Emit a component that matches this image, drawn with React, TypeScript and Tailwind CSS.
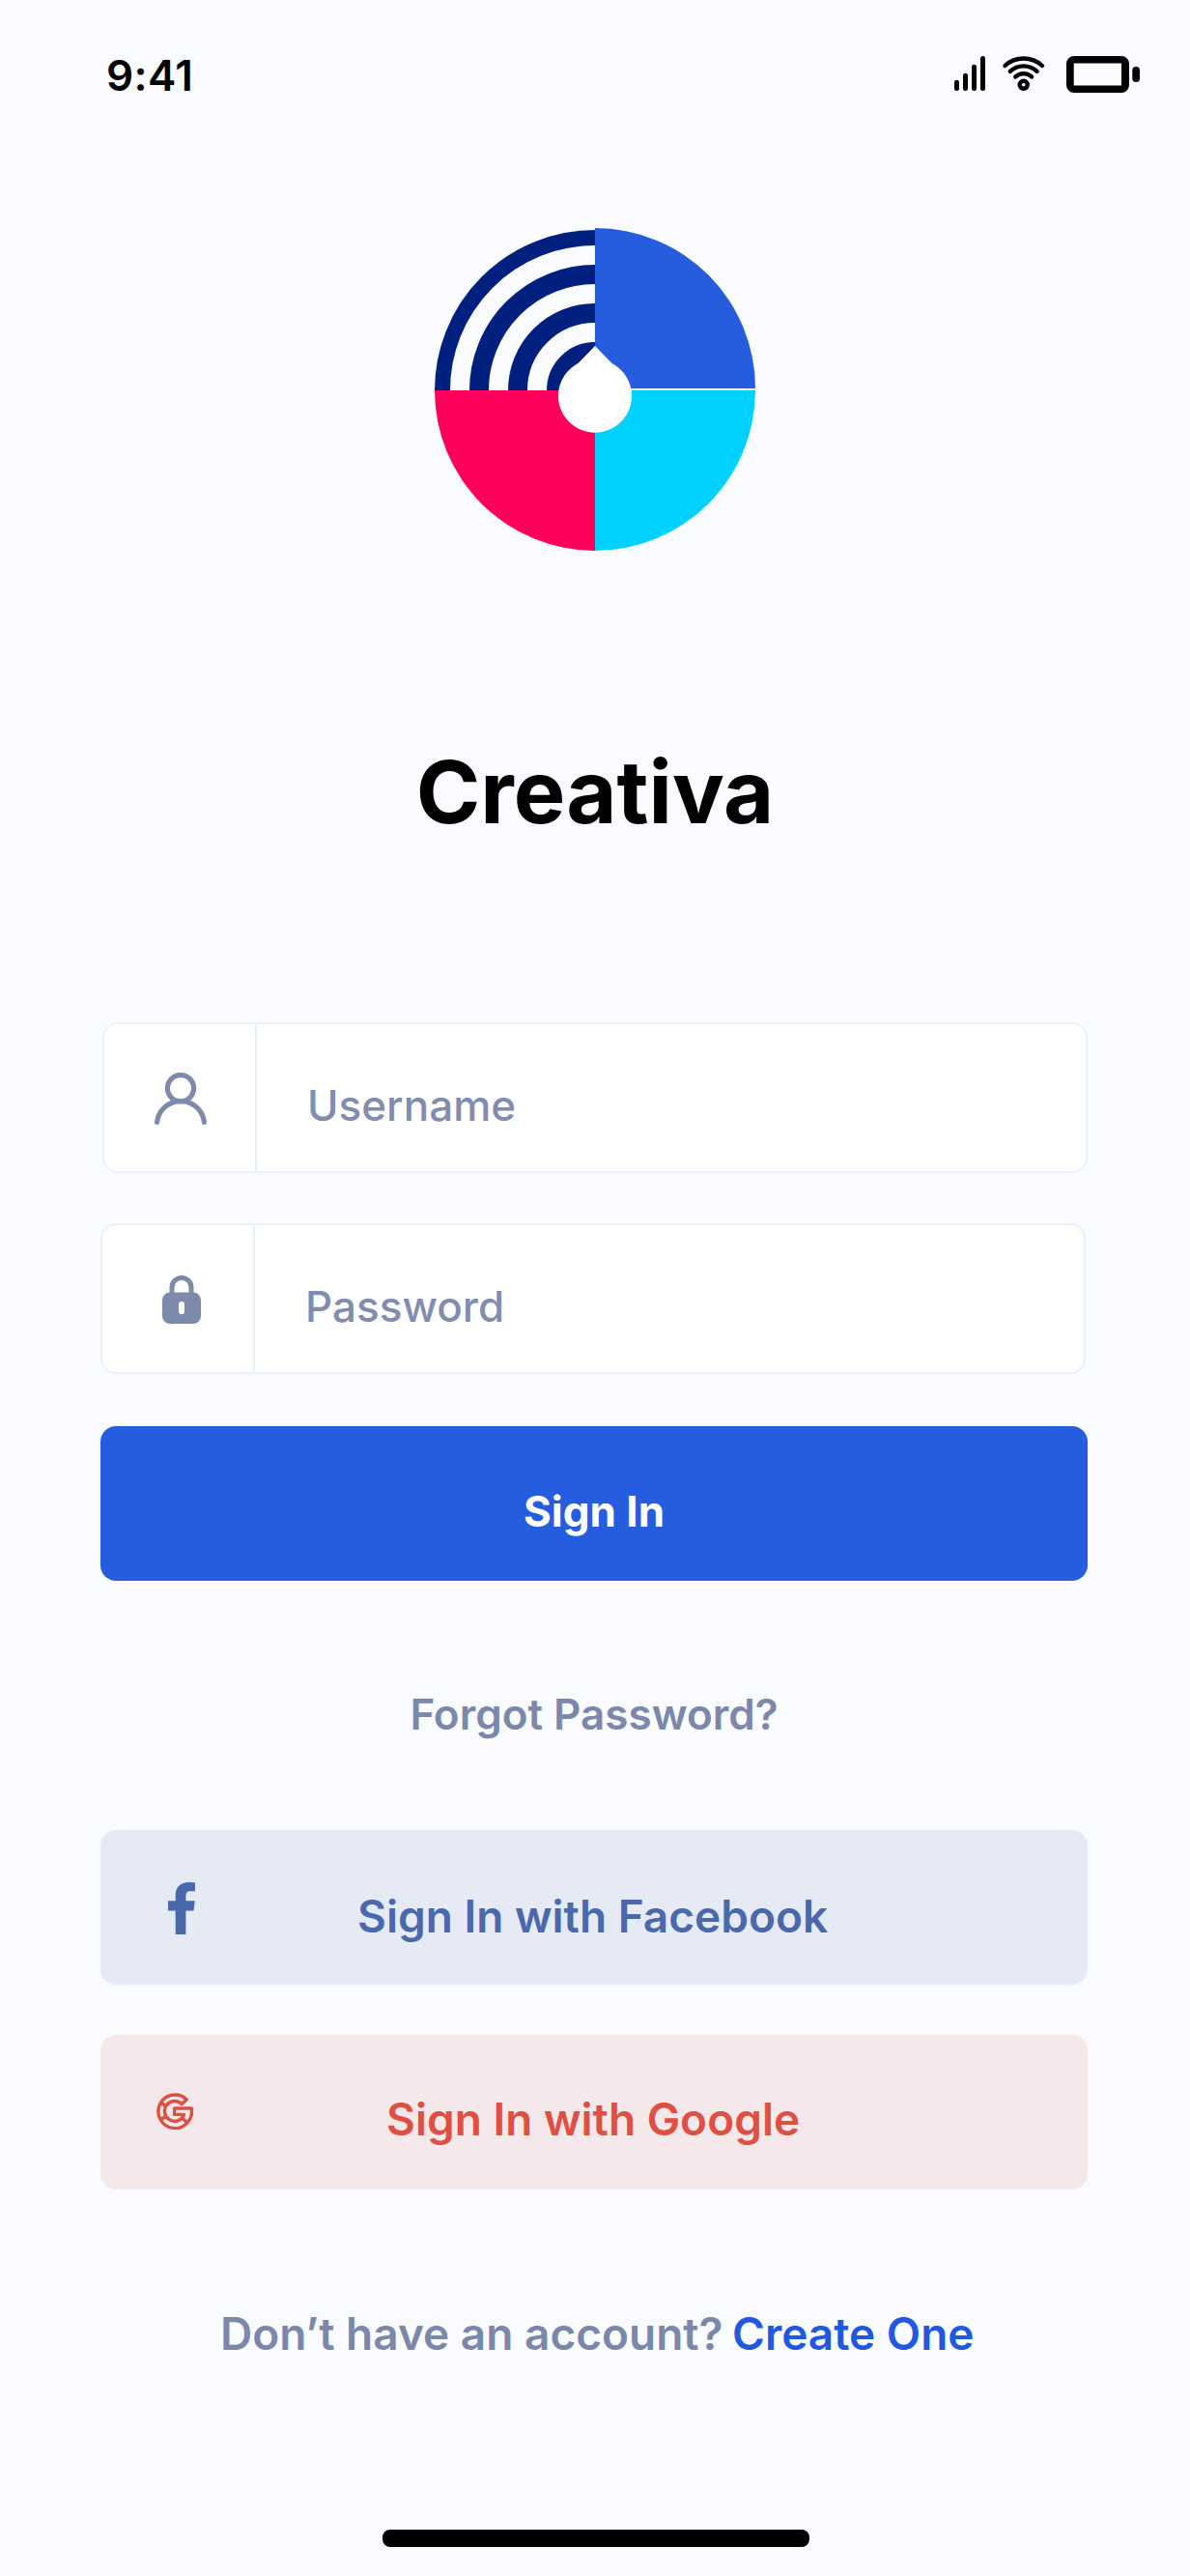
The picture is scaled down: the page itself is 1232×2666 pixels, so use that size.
import React from "react";

function StatusBar() {
  return (
    <header className="flex h-[105px] items-start justify-between pl-[110px] pr-[52px] pt-[51px]">
      <span className="text-[44px] font-semibold leading-[54px] tracking-[0.4px] text-black">9:41</span>
      <svg className="mt-[7px] h-[38px] w-[192px]" viewBox="988 58 192 38" fill="none" stroke="#000" strokeLinecap="round">
        <g fill="#000" stroke="none">
          <rect x="988" y="82.7" width="5" height="11.3" rx="2.5" />
          <rect x="997" y="75.7" width="5" height="18.3" rx="2.5" />
          <rect x="1006" y="66.7" width="5" height="27.3" rx="2.5" />
          <rect x="1015" y="58" width="5" height="36" rx="2.5" />
        </g>
        <g strokeWidth="4.4">
          <path d="M1040.4 68 A28.5 28.5 0 0 1 1079 68" />
          <path d="M1045.8 73.8 A20.5 20.5 0 0 1 1073.6 73.8" />
          <path d="M1051.3 79.4 A12.5 12.5 0 0 1 1068.1 79.4" />
          <circle cx="1059.7" cy="87.8" r="4" />
        </g>
        <path
          fill="#000"
          stroke="none"
          fillRule="evenodd"
          d="M1112 58 H1161 A8 8 0 0 1 1169 66 V88 A8 8 0 0 1 1161 96 H1112 A8 8 0 0 1 1104 88 V66 A8 8 0 0 1 1112 58 Z M1111.7 65.4 V88.4 H1161 V65.4 Z"
        />
        <rect x="1172.3" y="69" width="7.7" height="16" rx="3.8" fill="#000" stroke="none" />
      </svg>
    </header>
  );
}

function Logo() {
  return (
    <svg className="mx-auto mt-[131px] block h-[334px] w-[332px]" viewBox="0 0 332 334">
      <g fill="none" stroke="#002080">
        <path d="M8 168 A158 158 0 0 1 166 10" strokeWidth="16" />
        <path d="M46 168 A120 120 0 0 1 166 48" strokeWidth="20" />
        <path d="M86 168 A80 80 0 0 1 166 88" strokeWidth="20" />
        <path d="M126 168 A40 40 0 0 1 166 128" strokeWidth="20" />
      </g>
      <rect x="166" y="166" width="166" height="2" fill="#fff" />
      <path d="M166 0 A166 166 0 0 1 332 166 H166 Z" fill="#265cde" />
      <path d="M0 168 H166 V334 A166 166 0 0 1 0 168 Z" fill="#ff005c" />
      <path d="M166 168 H332 A166 166 0 0 1 166 334 Z" fill="#00d1ff" />
      <path d="M166 122 L183.5 140 A38 38 0 1 1 148.5 140 Z" fill="#fff" />
    </svg>
  );
}

function UserIcon() {
  return (
    <svg className="ml-[52px] mt-[50px] h-[54px] w-[54px]" viewBox="0 0 54 54" fill="none" stroke="#7d8aab" strokeWidth="5.2" strokeLinecap="round">
      <circle cx="27" cy="16.2" r="13.6" />
      <path d="M2.6 51.4 C4 39 14 29.6 27 29.6 S50 39 51.4 51.4" />
    </svg>
  );
}

function LockIcon() {
  return (
    <svg className="ml-[62px] mt-[52px] h-[50px] w-[40px]" viewBox="0 0 40 50">
      <path d="M10 21 V12.4 A10 10 0 0 1 30 12.4 V21" fill="none" stroke="#7d8aab" strokeWidth="5" />
      <rect x="0" y="17.5" width="40" height="32.5" rx="8" fill="#7d8aab" />
      <rect x="17" y="27" width="6" height="13.3" rx="3" fill="#fff" />
    </svg>
  );
}

function Field({ label, icon }: { label: string; icon: React.ReactNode }) {
  return (
    <label className="flex h-[156px] w-[1020px] overflow-hidden rounded-[16px] border-2 border-[#ebf0fd] bg-white">
      <span className="block w-[158px] shrink-0 border-r-2 border-[#e8effd]">{icon}</span>
      <span className="ml-[52px] mt-[57px] text-[44px] font-medium leading-[54px] text-[#808dae]">{label}</span>
    </label>
  );
}

function FacebookIcon() {
  return (
    <svg className="h-[54px] w-[28px]" viewBox="0 0 28 54" fill="#4a69ad">
      <path d="M18.4 54 V29.4 H26.4 L27.8 19.3 H18.4 V14.6 C18.4 11.2 19.6 9.2 23 9.2 H28 V0.5 C26.8 0.3 24.4 0 22 0 C13 0 7.7 5 7.7 13.6 V19.3 H0 V29.4 H7.7 V54 Z" />
    </svg>
  );
}

function GoogleIcon() {
  return (
    <svg className="h-[38px] w-[38px]" viewBox="0 0 38 38" fill="none" stroke="#de4f44" strokeWidth="3.4" strokeLinejoin="round">
      <path d="M31.2 6.8 A17.3 17.3 0 1 0 36.2 16 H18.6 V22.4 H28.6 A10.4 10.4 0 1 1 26.2 11.6 Z" />
      <path d="M4 10 L10 13.8 M4 27.8 L10 24.2 M26.6 26 L31.4 30.6" />
    </svg>
  );
}

export default function App() {
  return (
    <main className="flex h-[2666px] w-[1232px] flex-col overflow-hidden bg-[#f9fbff] font-['Inter',sans-serif]">
      <StatusBar />
      <Logo />
      <h1 className="mt-[195px] text-center text-[90px] font-bold leading-[109px] text-black">Creativa</h1>

      <form className="ml-[104px] mt-[184px] flex w-[1022px] flex-col">
        <div className="ml-[2px]">
          <Field label="Username" icon={<UserIcon />} />
        </div>
        <div className="mt-[52px]">
          <Field label="Password" icon={<LockIcon />} />
        </div>
        <button type="button" className="mt-[54px] flex h-[160px] items-start justify-center rounded-[16px] bg-[#265cde] pt-[61px] text-[44px] font-bold leading-[54px] text-white">
          Sign In
        </button>
        <a className="mt-[111px] text-center text-[44px] font-semibold leading-[54px] text-[#7b88aa]">Forgot Password?</a>
        <button type="button" className="mt-[93px] flex h-[160px] items-start rounded-[16px] bg-[#e5eaf4] pl-[70px] text-[46px] font-semibold leading-[56px] text-[#4a69ad]">
          <span className="mt-[54px] w-[28px]"><FacebookIcon /></span>
          <span className="ml-[168px] mt-[61px]">Sign In with Facebook</span>
        </button>
        <button type="button" className="mt-[52px] flex h-[160px] items-start rounded-[16px] bg-[#f4e8ea] pl-[58px] text-[46px] font-semibold leading-[56px] text-[#de4f44]">
          <span className="mt-[60px] w-[38px]"><GoogleIcon /></span>
          <span className="ml-[200px] mt-[59px]">Sign In with Google</span>
        </button>
      </form>

      <p className="mt-[121px] flex pl-[228px] text-[46px] font-semibold leading-[56px] text-[#7b88aa]">
        <span className="w-[530px]">Don’t have an account?</span>
        <a className="text-[#2058e0]">Create One</a>
      </p>
      <div className="ml-[396px] mt-[175px] h-[18px] w-[442px] rounded-[8px] bg-black" />
    </main>
  );
}
